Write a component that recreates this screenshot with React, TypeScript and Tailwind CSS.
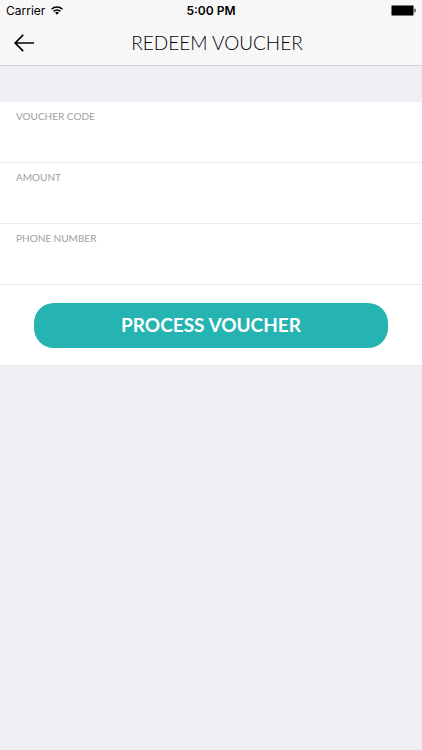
const fields = [
  { id: "voucher-code", label: "VOUCHER CODE", type: "text" },
  { id: "amount", label: "AMOUNT", type: "text" },
  { id: "phone-number", label: "PHONE NUMBER", type: "tel" },
];

function StatusBar() {
  return (
    <div className="grid h-5 grid-cols-3 items-center px-1.5 pt-0.5 font-['Inter','Liberation_Sans',sans-serif] text-xs text-black">
      <div className="flex items-center gap-1.5">
        <span>Carrier</span>
        <svg className="mb-0.5" width="12" height="9" viewBox="0 0 12 9" aria-hidden="true">
          <g fill="none" stroke="#000" strokeWidth="1.5">
            <path d="M.5 3.3a7.8 7.8 0 0 1 11 0" />
            <path d="M2.6 5.4a4.8 4.8 0 0 1 6.8 0" />
          </g>
          <path d="M4.1 6.8a2.7 2.7 0 0 1 3.8 0L6 8.8z" />
        </svg>
      </div>
      <span className="text-center font-semibold">5:00 PM</span>
      <svg className="mb-0.5 justify-self-end" width="25" height="11" viewBox="0 0 25 11" aria-hidden="true">
        <rect x=".5" y=".5" width="22" height="10" rx="1" fill="#000" stroke="#777" />
        <path d="M23.3 3.8h1.3v3.4h-1.3z" fill="#333" />
      </svg>
    </div>
  );
}

function NavBar() {
  return (
    <div className="grid h-[45px] grid-cols-[48px_1fr_36px] items-center">
      <button type="button" aria-label="Back" className="flex h-full items-center pl-3.5">
        <svg width="20" height="18" viewBox="0 0 20 18" fill="none" stroke="#000" strokeWidth="1.7" aria-hidden="true">
          <path d="M20 9H1.3M9.2.8 1.2 9l8 8.2" />
        </svg>
      </button>
      <h1 className="text-center text-[19px] leading-7 font-light text-black">REDEEM VOUCHER</h1>
    </div>
  );
}

export default function App() {
  return (
    <div className="min-h-screen bg-[#efeff4] font-['Lato','Liberation_Sans',sans-serif]">
      <header className="border-b border-[#d3d2d8] bg-[#f7f7f8]">
        <StatusBar />
        <NavBar />
      </header>

      <form className="mt-9 border-b border-[#e6e6ea] bg-white" onSubmit={(e) => e.preventDefault()}>
        {fields.map((field) => (
          <div key={field.id} className="flex h-[61px] flex-col border-b border-[#ebebed] px-4 pt-1.5">
            <label htmlFor={field.id} className="text-[10px] leading-4 text-[#a0a0a0]">
              {field.label}
            </label>
            <input id={field.id} type={field.type} className="w-full flex-1 text-base text-black outline-none" />
          </div>
        ))}
        <div className="px-[34px] pt-[18px] pb-[17px]">
          <button type="submit" className="h-[45px] w-full rounded-[20px] bg-[#25b4b1] text-[19px] font-bold text-white">
            PROCESS VOUCHER
          </button>
        </div>
      </form>
    </div>
  );
}
